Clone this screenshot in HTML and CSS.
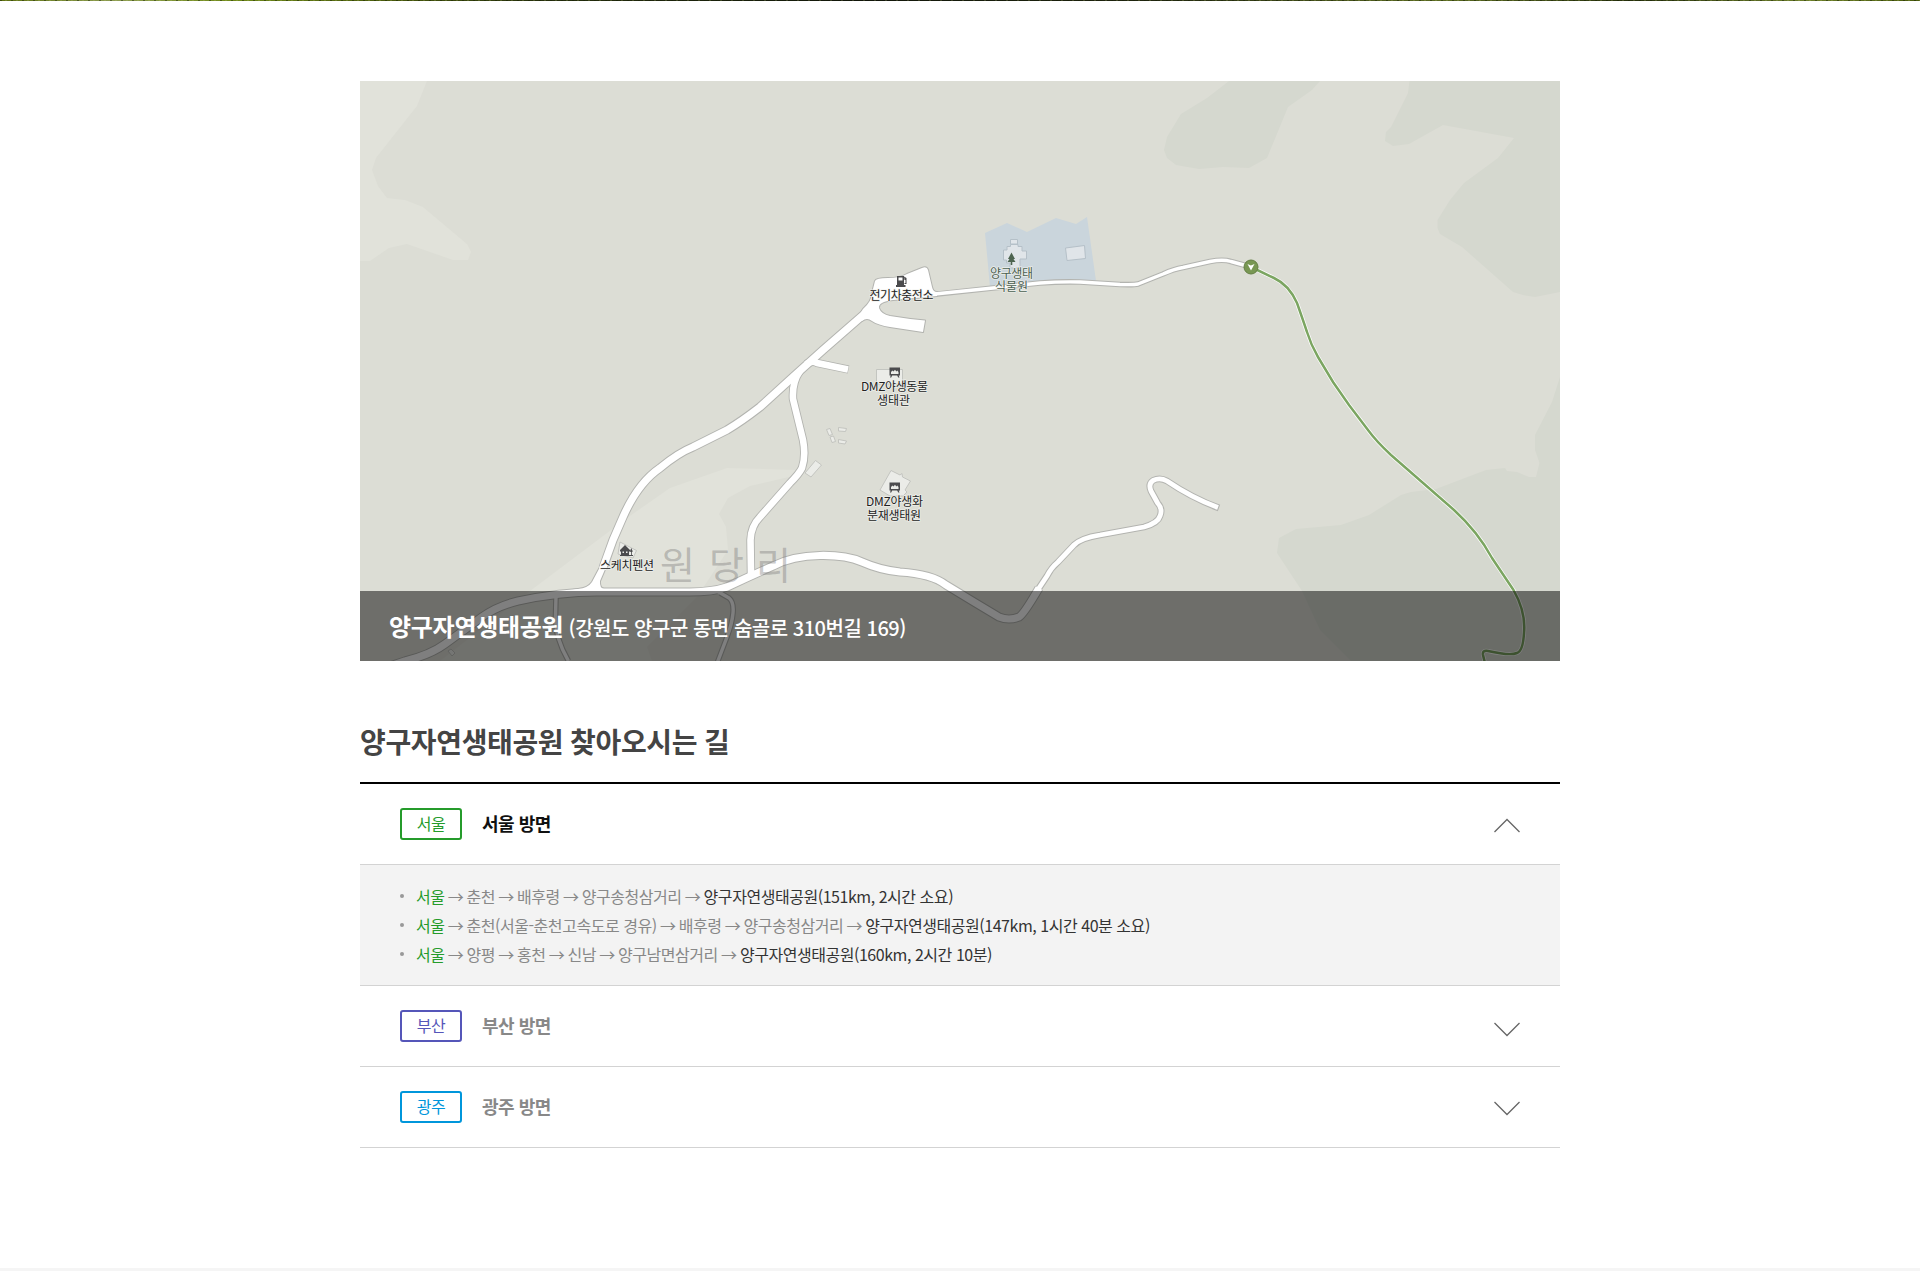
FILE: index.html
```html
<!DOCTYPE html>
<html lang="ko">
<head>
<meta charset="utf-8">
<title>양구자연생태공원 찾아오시는 길</title>
<link rel="stylesheet" href="styles.css">
</head>
<body>
<div class="visual-edge"></div>
<main class="container">
  <figure class="map">
    <svg class="map-canvas" viewBox="360 81 1200 580" aria-hidden="true">
      <g class="terrain-light">
        <path d="M360 81H427L417 106L376 158L372 170L378 186L387 198L405 200L423 207L467 244L471 252L468 260H453L407 244L389 248L370 261H360Z"/>
        <path d="M440 661L530 591L627 518L670 488L727 468L797 470L793 476L750 486L728 498L719 514L726 527L728 550L697 597L647 647L652 661Z"/>
      </g>
      <g class="terrain-dark">
        <path d="M1229 81L1207 98L1181 114L1167 137L1164 150L1167 158L1176 165L1199 169L1223 167L1249 168L1267 158L1288 107L1312 90L1320 81Z"/>
        <path d="M1409.500 81L1408 93L1391 127L1386 132L1385 141L1393 146L1409 144L1443 125L1514 138L1498 158L1464 183L1450 200L1437.500 220V228L1440 234L1462 247L1513 292L1523 295L1535 297L1560 292V81Z"/>
        <path d="M1560 377L1552 402L1535 435V450L1539.500 463L1536 477H1529L1517 472L1507 471L1505 468L1486 470L1436 489L1411 492L1401 495L1369 515L1341 525L1296 529L1279 538L1277 553L1302 591L1320 630L1351 661H1560Z"/>
      </g>
      <path class="garden" d="M985 233L1007 223L1027 232L1056 218L1076 224L1087 217L1096 281L990 287Z"/>
      <g class="garden-building">
        <path d="M1003.500 254V250H1007V246.500H1010.500V244.500H1018V246.500H1022V251H1026.500V259H1020V268H1010V263H1006.500V260H1003.500Z"/>
        <path d="M1010.500 239.500H1017.500V244H1010.500Z"/>
        <path d="M1065.500 248L1084.500 245.500L1085.500 258.500L1067 260.500Z"/>
      </g>
      <g class="building">
        <path d="M876.500 369.500H902.500V384H876.500Z"/>
        <path d="M891 470.500L900 475L902 473.500L902.500 477L910.500 481L905 490L907 492L903 496H890L880 490Z"/>
        <path d="M805 473L815.500 460.500L821.500 465L811 477Z"/>
        <path d="M826.500 429.500L830 428.500L832.500 434.500L829 435.500Z"/>
        <path d="M830 437L833.500 436L835.500 441.500L832 442.500Z"/>
        <path d="M838.500 427.500L846.500 428.500L845.500 431.500L838.500 431Z"/>
        <path d="M838.500 439.500L846.500 441L845 444L838.500 443Z"/>
        <path d="M620 542L636.500 550.500L633 558L618 554Z"/>
        <path d="M448 651L451 649L455 653L452 656Z"/>
      </g>

      <g class="road-edge">
        <path class="road-thin" d="M556 598L555.500 617Q556 630 558 637Q562 650 568.500 661"/>
        <path class="road-thin" d="M720 593L729 598Q734 602 733 613Q732 624 727 637L716 666"/>
        <path class="road-thin" d="M933 294.500L993 288L1040 283Q1060 281.500 1080 282L1120 284.500Q1134 285 1138 284L1163 274Q1174 269 1183 267.500L1210 261.500Q1223 259 1231 261.500L1251 267"/>
        <path class="road-main" d="M390 666L405 661Q430 655 445 644L482 617Q497 606 518 601Q560 592 597 592H690Q712 592 727 587Q748 577 773 566Q792 556 820 555.500Q846 555 862 562Q880 570 900 572Q932 574 946 585L974 602L999 617Q1009 621 1019 617Q1024 614 1039 588"/>
        <path class="road-side" d="M1033 599L1039 588L1047 576Q1051 568 1058 562L1074 545Q1081 538 1100 535L1144 527Q1158 523 1160 516Q1163 509 1157.600 503L1151 491Q1148 484 1153 480.500Q1160 477 1167 481Q1192 498 1219 508"/>
        <path class="road-main" d="M603 568L613 540L623 517Q638 483 660 468Q678 453 693 447L727 430Q742 421 760 407L793 377L823 350L870 309"/>
        <path class="road-side wide" d="M800 371Q792 382 793 399L803 440Q806 456 802 468Q799 474 790 483L760 517Q751 526 750.500 540L751 574"/>
        <path class="road-side wide" d="M806 364Q813 360 817 363L848.500 369.500"/>
        <path class="plaza" d="M863 309Q872 301 872 293L875 281Q876 278 888 278Q900 278 907 274L922 268Q927 266 928 270L932 287Q933 292 937 292V296L893 300Q878 302 879 308Q881 314 890 316Q908 319 925 320.500L923 332L890 327Q878 325 872 321Q867 317 862 321L855 322Z"/>
        <path class="plaza" d="M600 567L592 582Q588 588 578 589L560 592.500H612L611 589H604Q599.500 588 600 581L606 567Z"/>
      </g>
      <g class="road-fill">
        <path class="road-thin" d="M556 596L555.500 617Q556 630 558 637Q562 650 568.500 661"/>
        <path class="road-thin" d="M717 591L729 598Q734 602 733 613Q732 624 727 637L716 666"/>
        <path class="road-thin" d="M930 294.500L993 288L1040 283Q1060 281.500 1080 282L1120 284.500Q1134 285 1138 284L1163 274Q1174 269 1183 267.500L1210 261.500Q1223 259 1231 261.500L1251 267"/>
        <path class="road-main" d="M390 666L405 661Q430 655 445 644L482 617Q497 606 518 601Q560 592 597 592H690Q712 592 727 587Q748 577 773 566Q792 556 820 555.500Q846 555 862 562Q880 570 900 572Q932 574 946 585L974 602L999 617Q1009 621 1019 617Q1024 614 1039 588"/>
        <path class="road-side" d="M1033 599L1039 588L1047 576Q1051 568 1058 562L1074 545Q1081 538 1100 535L1144 527Q1158 523 1160 516Q1163 509 1157.600 503L1151 491Q1148 484 1153 480.500Q1160 477 1167 481Q1192 498 1218 507.500"/>
        <path class="road-main" d="M602.500 569L613 540L623 517Q638 483 660 468Q678 453 693 447L727 430Q742 421 760 407L793 377L823 350L870 309"/>
        <path class="road-side wide" d="M800 371Q792 382 793 399L803 440Q806 456 802 468Q799 474 790 483L760 517Q751 526 750.500 540L751 574"/>
        <path class="road-side wide" d="M806 364Q813 360 817 363L848 369.400"/>
        <path class="plaza" d="M863 309Q872 301 872 293L875 281Q876 278 888 278Q900 278 907 274L922 268Q927 266 928 270L932 287Q933 292 937 292V296L893 300Q878 302 879 308Q881 314 890 316Q908 319 925 320.500L923 332L890 327Q878 325 872 321Q867 317 862 321L855 322Z"/>
        <path class="plaza" d="M600 567L592 582Q588 588 578 589L560 592.500H612L611 589H604Q599.500 588 600 581L606 567Z"/>
      </g>
      <g class="trail">
        <path class="trail-edge" d="M1251 267L1274 278Q1289 285 1297 303Q1303 320 1307 332Q1311 345 1318 357L1333 382L1349 405L1368 430Q1376 441 1391 455L1454 510Q1478 532 1492 558L1513.500 590Q1526 612 1524 633Q1523 651 1517 653Q1510 656 1488 651Q1482 650 1483 655L1485 663"/>
        <path class="trail-line" d="M1251 267L1274 278Q1289 285 1297 303Q1303 320 1307 332Q1311 345 1318 357L1333 382L1349 405L1368 430Q1376 441 1391 455L1454 510Q1478 532 1492 558L1513.500 590Q1526 612 1524 633Q1523 651 1517 653Q1510 656 1488 651Q1482 650 1483 655L1485 663"/>
      </g>
      <g class="trailhead">
        <circle cx="1251" cy="267" r="7"/>
        <path d="M1247.500 264L1250.900 265.500L1254.500 264L1251 270.500Z"/>
      </g>

      <g class="poi">
        <path d="M897 276H904V285H905.500V287H896V285H897ZM898.500 277.500V280.500H902.500V277.500ZM904 276.500L906.500 278V284H904.500V283H905.500V280H904.500Z" fill-rule="evenodd"/>
        <path class="poi-tree" d="M1011.500 252.500L1015 259H1013.500L1015.500 262H1012.300V265H1010.700V262H1007.500L1009.500 259H1008Z"/>
        <path d="M889.500 367.500H900V375.500H898.700L899.500 377.500H898.200L897.200 375.500H892.200L891.200 377.500H890L890.700 375.500H889.500ZM891 374H898.500V372L897.300 370.500L896.300 371.500L895 369.800L893.500 371.500L892.500 370.500L891 372Z" fill-rule="evenodd"/>
        <path d="M889.500 482.500H900V490.500H898.700L899.500 492.500H898.200L897.200 490.500H892.200L891.200 492.500H890L890.700 490.500H889.500ZM891 489H898.500V487L897.300 485.500L896.300 486.500L895 484.800L893.500 486.500L892.500 485.500L891 487Z" fill-rule="evenodd"/>
        <path d="M625 545L630 550V551.500H629V555H631V552L629.800 551.500L631.300 548L632.800 551.500L631.800 552V555H633V556H620V555H621V551.500H620V550ZM622.500 551.500V553H624V551.500ZM626 551.500V553H627.500V551.500Z" fill-rule="evenodd"/>
      </g>
      <g class="labels">
        <text x="901.500" y="300" textLength="64">전기차충전소</text>
        <text class="green" x="1011.500" y="277.800" textLength="43">양구생태</text>
        <text class="green" x="1011.500" y="291" textLength="33">식물원</text>
        <text x="894.500" y="391" textLength="67">DMZ야생동물</text>
        <text x="893.500" y="405" textLength="33">생태관</text>
        <text x="894.500" y="506" textLength="57">DMZ야생화</text>
        <text x="894" y="520" textLength="54">분재생태원</text>
        <text x="627" y="570" textLength="54">스케치펜션</text>
      </g>
      <text class="district" x="660 709 756" y="579">원당리</text>
    </svg>
    <figcaption class="map-caption"><strong>양구자연생태공원</strong> (강원도 양구군 동면 숨골로 310번길 169)</figcaption>
  </figure>

  <h2 class="section-title">양구자연생태공원 찾아오시는 길</h2>
  <section class="routes">
    <div class="route open">
      <div class="route-head">
        <span class="badge seoul">서울</span>
        <span class="route-name">서울 방면</span>
        <svg class="chevron up" viewBox="0 0 28 15"><path d="M1.500 14L14 1.500L26.500 14"/></svg>
      </div>
      <ul class="route-list">
        <li><em>서울</em><i> → </i>춘천<i> → </i>배후령<i> → </i>양구송청삼거리<i> → </i><b>양구자연생태공원(151km, 2시간 소요)</b></li>
        <li><em>서울</em><i> → </i>춘천(서울-춘천고속도로 경유)<i> → </i>배후령<i> → </i>양구송청삼거리<i> → </i><b>양구자연생태공원(147km, 1시간 40분 소요)</b></li>
        <li><em>서울</em><i> → </i>양평<i> → </i>홍천<i> → </i>신남<i> → </i>양구남면삼거리<i> → </i><b>양구자연생태공원(160km, 2시간 10분)</b></li>
      </ul>
    </div>
    <div class="route">
      <div class="route-head">
        <span class="badge busan">부산</span>
        <span class="route-name">부산 방면</span>
        <svg class="chevron busan-chevron" viewBox="0 0 28 15"><path d="M1.500 1L14 13.500L26.500 1"/></svg>
      </div>
    </div>
    <div class="route">
      <div class="route-head">
        <span class="badge gwangju">광주</span>
        <span class="route-name">광주 방면</span>
        <svg class="chevron" viewBox="0 0 28 15"><path d="M1.500 1L14 13.500L26.500 1"/></svg>
      </div>
    </div>
  </section>
</main>
<footer class="footer-edge"></footer>
</body>
</html>
```
FILE: styles.css
```css
* { box-sizing: border-box; margin: 0; padding: 0; }
body {
  display: flex;
  flex-direction: column;
  height: 1271px;
  overflow: hidden;
  background: #fff;
  color: #888;
  font: 400 16px/1.5 "Noto Sans CJK KR", sans-serif;
  letter-spacing: -0.5px;
}
.visual-edge {
  height: 1px;
  background:
    repeating-linear-gradient(90deg, rgba(20, 30, 5, .45) 0 2px, transparent 2px 5px, rgba(190, 200, 120, .2) 5px 7px, transparent 7px 11px),
    linear-gradient(90deg, #5d7010, #8c9c50 6%, #6f8a18 12%, #4a5c0c 20%, #26300c 28%, #10140a 45%, #20260f 60%, #5a6a20 75%, #26300c 85%, #6b7d28 94%, #4a5c0c);
}
.container { width: 1200px; margin: 80px auto 0; }

.map { display: grid; width: 1200px; height: 580px; background: #dcddd5; }
.map-canvas { grid-area: 1 / 1; width: 1200px; height: 580px; }
.terrain-light { fill: #e1e2da; }
.terrain-dark { fill: #d5d8cf; }
.garden { fill: #cad5dc; }
.garden-building { fill: #e0e5e9; stroke: #b5c0c8; }
.building { fill: #ebece8; stroke: #c0c1bc; stroke-width: .9; }
.road-edge, .road-fill { fill: none; stroke-linejoin: round; }
.road-edge { stroke: #b3b4b0; }
.road-fill { stroke: #fff; }
.road-edge .road-main { stroke-width: 9.2; }
.road-fill .road-main { stroke-width: 7.2; }
.road-edge .road-side { stroke-width: 6.8; }
.road-fill .road-side { stroke-width: 4.8; }
.road-edge .wide { stroke-width: 8.4; }
.road-fill .wide { stroke-width: 6.6; }
.road-edge .road-thin { stroke-width: 5.6; }
.road-fill .road-thin { stroke-width: 3.4; }
.road-edge .plaza { stroke-width: 2; }
.road-fill .plaza { fill: #fff; stroke: none; }
.trail { fill: none; }
.trail-edge { stroke: #fff; stroke-width: 4; }
.trail-line { stroke: #7ba561; stroke-width: 2.5; }
.trailhead circle { fill: #789753; stroke: #647f44; }
.trailhead path { fill: #fff; }
.poi { fill: #4b4b4d; }
.poi-tree { fill: #4d6450; }
.labels {
  font-size: 12px;
  font-weight: 400;
  letter-spacing: 0;
  text-anchor: middle;
  fill: #222;
  stroke: rgba(240, 241, 237, .85);
  stroke-width: 1.6px;
  stroke-linejoin: round;
  paint-order: stroke;
}
.labels .green { fill: #4a6051; }
.district {
  font-size: 38px;
  font-weight: 400;
  letter-spacing: 0;
  fill: #777;
  fill-opacity: .4;
}
.map-caption {
  grid-area: 1 / 1;
  align-self: end;
  height: 70px;
  padding-left: 29px;
  background: rgba(0, 0, 0, .5);
  color: #fff;
  font-size: 20px;
  font-weight: 500;
  letter-spacing: -0.48px;
  line-height: 70px;
}
.map-caption strong { font-size: 24px; font-weight: 700; letter-spacing: -0.28px; }

.section-title {
  height: 121px;
  padding-top: 60px;
  color: #444;
  font-size: 28px;
  font-weight: 700;
  letter-spacing: -0.35px;
  word-spacing: -0.7px;
  line-height: 40px;
}
.routes { border-top: 2px solid #000; }
.route { border-bottom: 1px solid #d3d3d3; }
.route-head { display: flex; align-items: center; height: 80px; padding: 0 39px 0 40px; }
.badge {
  width: 62px;
  height: 32px;
  border: 2px solid;
  border-radius: 3px;
  font-size: 16px;
  line-height: 26px;
  text-align: center;
}
.seoul { color: #259b2b; }
.busan { color: #5556b9; }
.gwangju { color: #0096db; }
.route-name { margin: 0 0 2px 20px; font-size: 18px; font-weight: 700; }
.open .route-name { color: #111; }
.chevron {
  width: 28px;
  height: 15px;
  margin-left: auto;
  fill: none;
  stroke: #666;
  stroke-width: 1.3;
}
.chevron.up { margin-top: 3px; }
.busan-chevron { margin-top: 7px; }
.chevron:not(.up):not(.busan-chevron) { margin-top: 3px; }
.route-list {
  height: 121px;
  padding: 16px 40px 0;
  border-top: 1px solid #d3d3d3;
  background: #f3f3f3;
  letter-spacing: -0.46px;
  list-style: none;
}
.route-list li { display: flex; align-items: center; height: 29px; white-space: pre; }
.route-list li::before {
  content: "";
  width: 4px;
  height: 4px;
  margin: 0 12px 0 0;
  border-radius: 50%;
  background: #999;
}
.route-list em { color: #259b2b; font-style: normal; }
.route-list i { margin: 0 .1px; font-style: normal; }
.route-list b { color: #333; font-weight: 400; }
.footer-edge { height: 3px; margin-top: auto; background: #f5f5f5; }
```
